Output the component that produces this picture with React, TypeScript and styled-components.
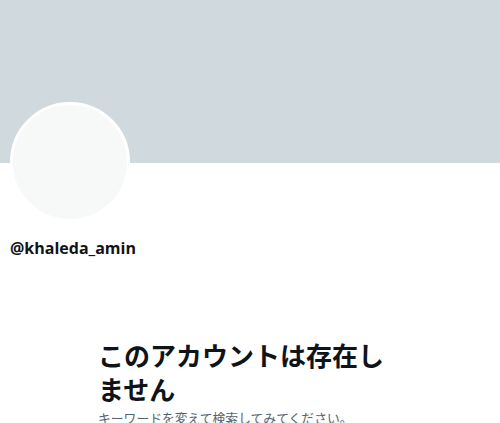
import React from "react";
import styled, { createGlobalStyle } from "styled-components";

const Global = createGlobalStyle`
  html, body { margin: 0; padding: 0; background: #ffffff; }
  body { font-family: "Open Sans", "Noto Sans CJK JP", sans-serif; color: #0f1419; }
`;

const Page = styled.div`
  display: flex;
  flex-direction: column;
  width: 500px;
  height: 423px;
  overflow: hidden;
`;

const Banner = styled.div`
  height: 163px;
  background: #cfd9de;
  flex-shrink: 0;
`;

const ProfileHeader = styled.div`
  display: flex;
  flex-direction: column;
  padding: 0 10px;
`;

const Avatar = styled.div`
  width: 114px;
  height: 114px;
  margin-top: -61px;
  border: 3px solid #ffffff;
  border-radius: 50%;
  background: #f7f9f9;
`;

const Handle = styled.div`
  margin-top: 16px;
  font-family: "Open Sans", "Noto Sans CJK JP", sans-serif;
  font-weight: 700;
  font-size: 16px;
  line-height: 20px;
  color: #0f1419;
`;

const EmptyState = styled.div`
  width: 304px;
  margin: 80px auto 0;
  display: flex;
  flex-direction: column;
  gap: 4px;
`;

const Title = styled.div`
  font-family: "Noto Sans CJK JP", sans-serif;
  font-weight: 700;
  font-size: 26px;
  line-height: 34px;
  color: #0f1419;
`;

const Sub = styled.div`
  font-family: "Noto Sans CJK JP", sans-serif;
  font-size: 12.8px;
  line-height: 16px;
  color: #536471;
`;

export default function App() {
  return (
    <Page>
      <Global />
      <Banner />
      <ProfileHeader>
        <Avatar />
        <Handle>@khaleda_amin</Handle>
      </ProfileHeader>
      <EmptyState>
        <Title>このアカウントは存在しません</Title>
        <Sub>キーワードを変えて検索してみてください。</Sub>
      </EmptyState>
    </Page>
  );
}
